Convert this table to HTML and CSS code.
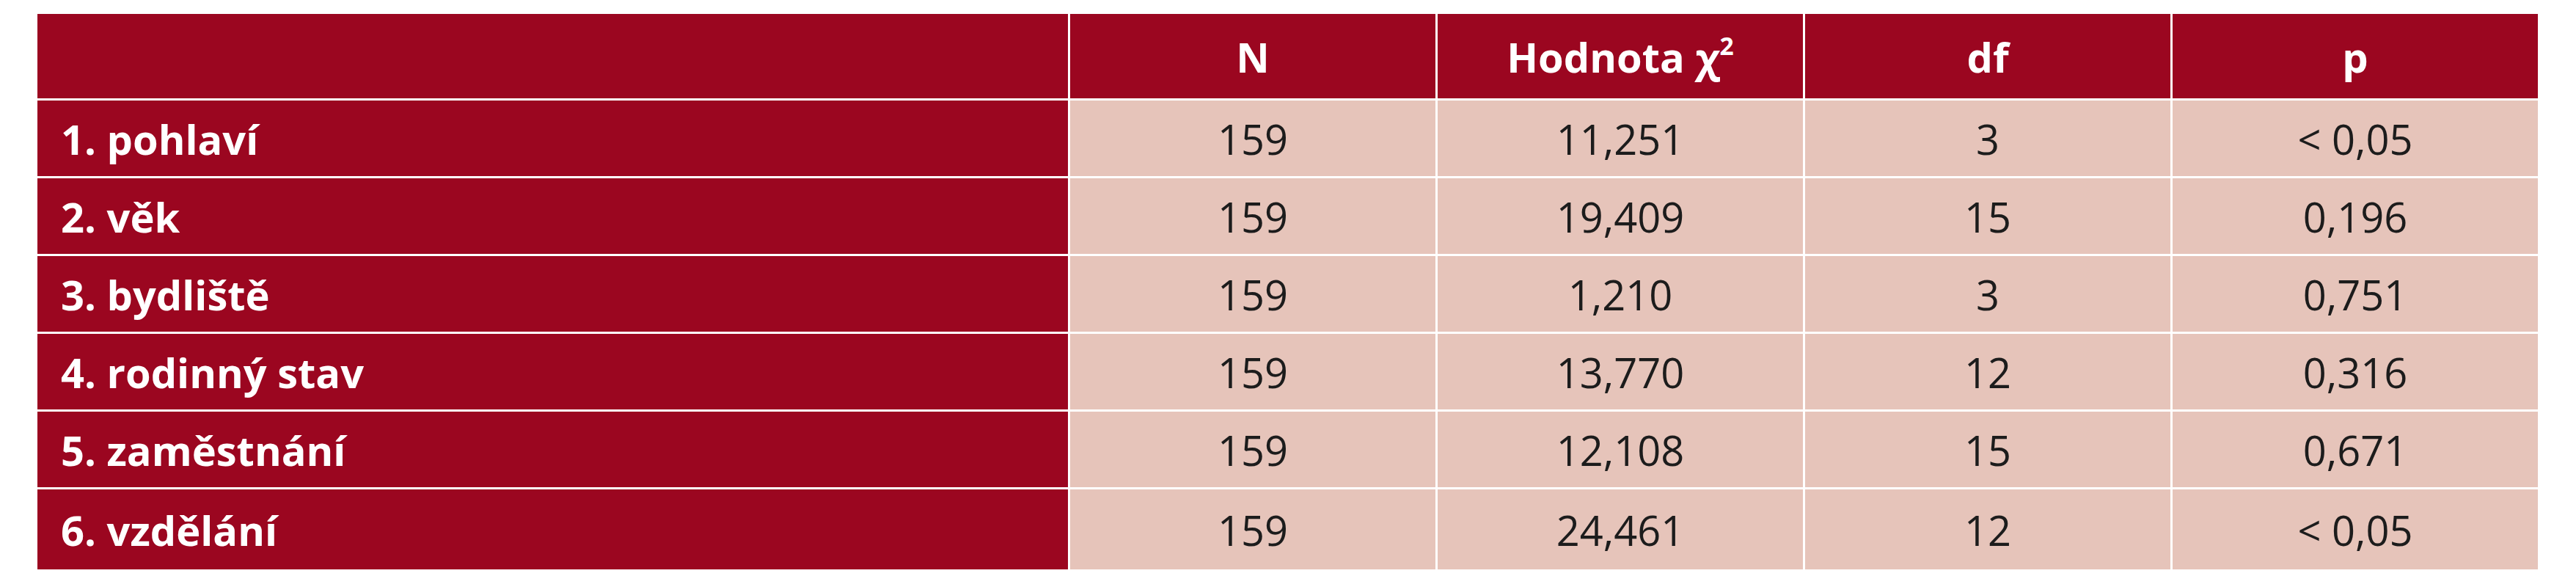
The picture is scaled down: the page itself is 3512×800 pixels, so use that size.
FILE: index.html
```html
<!DOCTYPE html>
<html lang="cs">
<head>
<meta charset="utf-8">
<title>Tabulka</title>
<link rel="stylesheet" href="styles.css">
</head>
<body>
<div class="page">
<table class="stats">
  <colgroup>
    <col class="c-label">
    <col class="c-data">
    <col class="c-data">
    <col class="c-data">
    <col class="c-data">
  </colgroup>
  <thead>
    <tr class="head">
      <th class="label"></th>
      <th>N</th>
      <th>Hodnota χ<sup>2</sup></th>
      <th>df</th>
      <th>p</th>
    </tr>
  </thead>
  <tbody>
    <tr><th class="label">1. pohlaví</th><td>159</td><td>11,251</td><td>3</td><td>&lt; 0,05</td></tr>
    <tr><th class="label">2. věk</th><td>159</td><td>19,409</td><td>15</td><td>0,196</td></tr>
    <tr><th class="label">3. bydliště</th><td>159</td><td>1,210</td><td>3</td><td>0,751</td></tr>
    <tr><th class="label">4. rodinný stav</th><td>159</td><td>13,770</td><td>12</td><td>0,316</td></tr>
    <tr><th class="label">5. zaměstnání</th><td>159</td><td>12,108</td><td>15</td><td>0,671</td></tr>
    <tr class="last"><th class="label">6. vzdělání</th><td>159</td><td>24,461</td><td>12</td><td>&lt; 0,05</td></tr>
  </tbody>
</table>
</div>
</body>
</html>
```
FILE: styles.css
```css
html, body {
  margin: 0;
  padding: 0;
  background: #ffffff;
}
.page {
  padding: 16px 0 0 48px;
}
.stats {
  border-collapse: separate;
  border-spacing: 3px;
  table-layout: fixed;
  width: 3415px;
  font-family: "Open Sans", "Liberation Sans", sans-serif;
}
.c-label { width: 1405px; }
.c-data { width: 498px; }
.stats th,
.stats td {
  padding: 0;
  text-align: center;
  vertical-align: middle;
  font-size: 56px;
  line-height: 1;
}
.head th {
  height: 115px;
  background: #9b0620;
  color: #ffffff;
  font-weight: 700;
}
.stats tbody tr { height: 103px; }
.stats tbody tr.last { height: 109px; }
.stats td {
  background: #e6c4ba;
  color: #1c1c1c;
  font-weight: 400;
}
.stats th.label {
  background: #9b0620;
  color: #ffffff;
  font-weight: 700;
  text-align: left;
  padding-left: 32px;
}
.stats sup {
  font-size: 0.6em;
  line-height: 0;
  vertical-align: 0.7em;
}
```
